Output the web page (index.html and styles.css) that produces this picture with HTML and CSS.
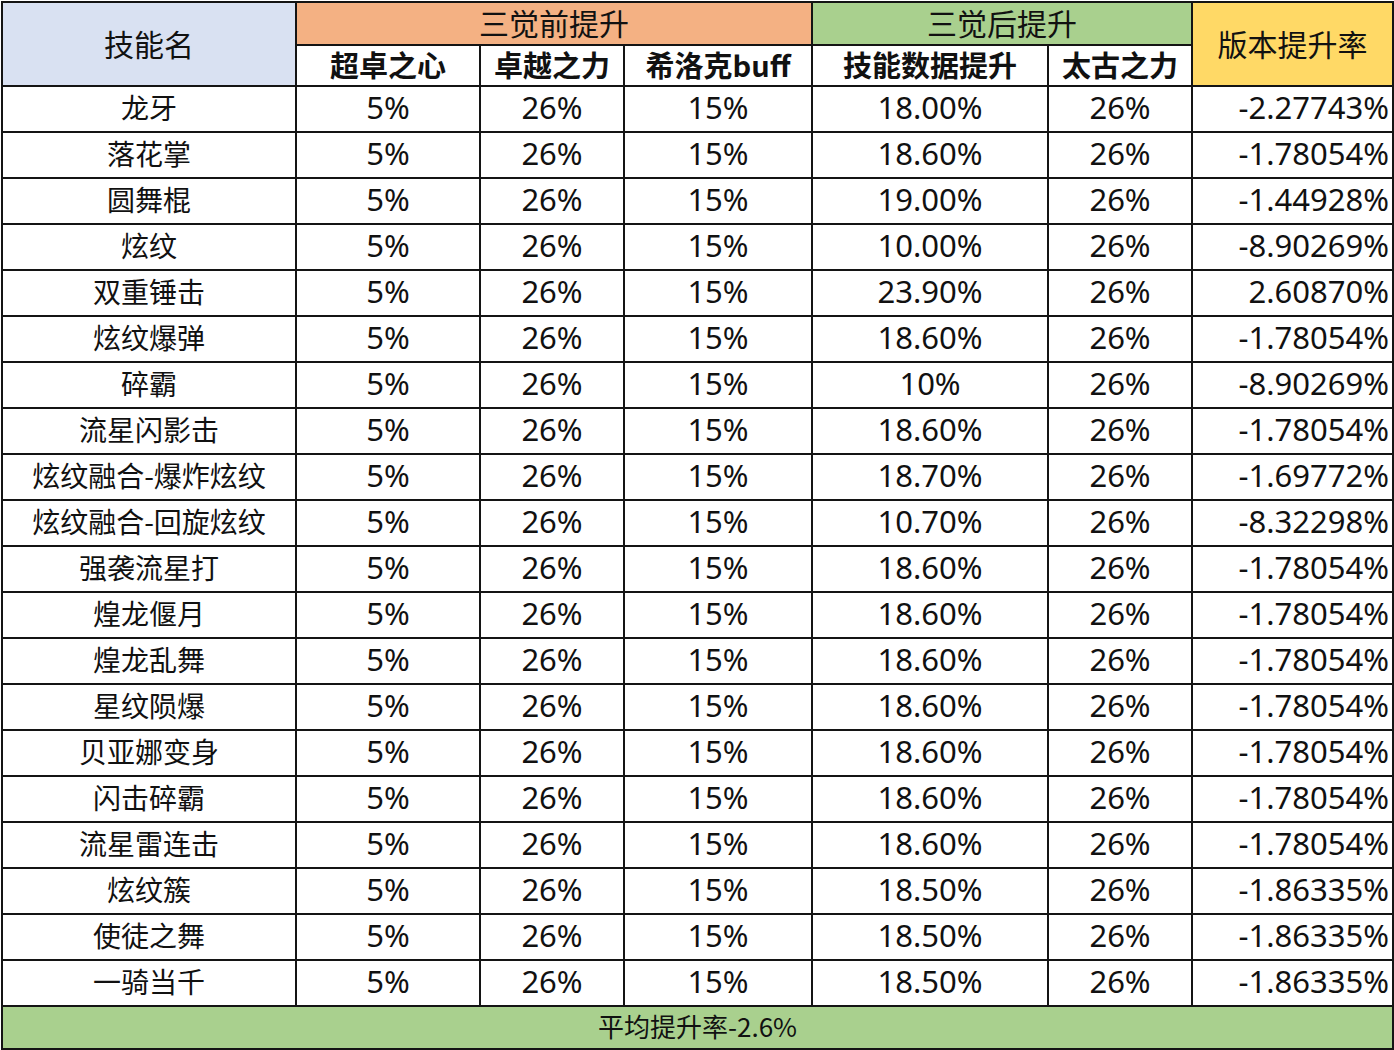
FILE: index.html
```html
<!DOCTYPE html>
<html lang="zh-CN">
<head>
<meta charset="utf-8">
<title>技能提升率</title>
<link rel="stylesheet" href="styles.css">
</head>
<body>
<table class="sheet">
  <colgroup>
    <col class="c1"><col class="c2"><col class="c3"><col class="c4"><col class="c5"><col class="c6"><col class="c7">
  </colgroup>
  <thead>
    <tr class="h1">
      <th rowspan="2" class="name-head">技能名</th>
      <th colspan="3" class="pre">三觉前提升</th>
      <th colspan="2" class="post">三觉后提升</th>
      <th rowspan="2" class="rate-head">版本提升率</th>
    </tr>
    <tr class="h2">
      <th class="sub">超卓之心</th>
      <th class="sub">卓越之力</th>
      <th class="sub">希洛克buff</th>
      <th class="sub">技能数据提升</th>
      <th class="sub">太古之力</th>
    </tr>
  </thead>
  <tbody>
    <tr><td class="name">龙牙</td><td class="num">5%</td><td class="num">26%</td><td class="num">15%</td><td class="num">18.00%</td><td class="num">26%</td><td class="num rate">-2.27743%</td></tr>
    <tr><td class="name">落花掌</td><td class="num">5%</td><td class="num">26%</td><td class="num">15%</td><td class="num">18.60%</td><td class="num">26%</td><td class="num rate">-1.78054%</td></tr>
    <tr><td class="name">圆舞棍</td><td class="num">5%</td><td class="num">26%</td><td class="num">15%</td><td class="num">19.00%</td><td class="num">26%</td><td class="num rate">-1.44928%</td></tr>
    <tr><td class="name">炫纹</td><td class="num">5%</td><td class="num">26%</td><td class="num">15%</td><td class="num">10.00%</td><td class="num">26%</td><td class="num rate">-8.90269%</td></tr>
    <tr><td class="name">双重锤击</td><td class="num">5%</td><td class="num">26%</td><td class="num">15%</td><td class="num">23.90%</td><td class="num">26%</td><td class="num rate">2.60870%</td></tr>
    <tr><td class="name">炫纹爆弹</td><td class="num">5%</td><td class="num">26%</td><td class="num">15%</td><td class="num">18.60%</td><td class="num">26%</td><td class="num rate">-1.78054%</td></tr>
    <tr><td class="name">碎霸</td><td class="num">5%</td><td class="num">26%</td><td class="num">15%</td><td class="num">10%</td><td class="num">26%</td><td class="num rate">-8.90269%</td></tr>
    <tr><td class="name">流星闪影击</td><td class="num">5%</td><td class="num">26%</td><td class="num">15%</td><td class="num">18.60%</td><td class="num">26%</td><td class="num rate">-1.78054%</td></tr>
    <tr><td class="name">炫纹融合-爆炸炫纹</td><td class="num">5%</td><td class="num">26%</td><td class="num">15%</td><td class="num">18.70%</td><td class="num">26%</td><td class="num rate">-1.69772%</td></tr>
    <tr><td class="name">炫纹融合-回旋炫纹</td><td class="num">5%</td><td class="num">26%</td><td class="num">15%</td><td class="num">10.70%</td><td class="num">26%</td><td class="num rate">-8.32298%</td></tr>
    <tr><td class="name">强袭流星打</td><td class="num">5%</td><td class="num">26%</td><td class="num">15%</td><td class="num">18.60%</td><td class="num">26%</td><td class="num rate">-1.78054%</td></tr>
    <tr><td class="name">煌龙偃月</td><td class="num">5%</td><td class="num">26%</td><td class="num">15%</td><td class="num">18.60%</td><td class="num">26%</td><td class="num rate">-1.78054%</td></tr>
    <tr><td class="name">煌龙乱舞</td><td class="num">5%</td><td class="num">26%</td><td class="num">15%</td><td class="num">18.60%</td><td class="num">26%</td><td class="num rate">-1.78054%</td></tr>
    <tr><td class="name">星纹陨爆</td><td class="num">5%</td><td class="num">26%</td><td class="num">15%</td><td class="num">18.60%</td><td class="num">26%</td><td class="num rate">-1.78054%</td></tr>
    <tr><td class="name">贝亚娜变身</td><td class="num">5%</td><td class="num">26%</td><td class="num">15%</td><td class="num">18.60%</td><td class="num">26%</td><td class="num rate">-1.78054%</td></tr>
    <tr><td class="name">闪击碎霸</td><td class="num">5%</td><td class="num">26%</td><td class="num">15%</td><td class="num">18.60%</td><td class="num">26%</td><td class="num rate">-1.78054%</td></tr>
    <tr><td class="name">流星雷连击</td><td class="num">5%</td><td class="num">26%</td><td class="num">15%</td><td class="num">18.60%</td><td class="num">26%</td><td class="num rate">-1.78054%</td></tr>
    <tr><td class="name">炫纹簇</td><td class="num">5%</td><td class="num">26%</td><td class="num">15%</td><td class="num">18.50%</td><td class="num">26%</td><td class="num rate">-1.86335%</td></tr>
    <tr><td class="name">使徒之舞</td><td class="num">5%</td><td class="num">26%</td><td class="num">15%</td><td class="num">18.50%</td><td class="num">26%</td><td class="num rate">-1.86335%</td></tr>
    <tr><td class="name">一骑当千</td><td class="num">5%</td><td class="num">26%</td><td class="num">15%</td><td class="num">18.50%</td><td class="num">26%</td><td class="num rate">-1.86335%</td></tr>
  </tbody>
  <tfoot>
    <tr><td colspan="7" class="avg">平均提升率-2.6%</td></tr>
  </tfoot>
</table>
</body>
</html>
```
FILE: styles.css
```css
html, body {
  margin: 0;
  padding: 0;
  background: #ffffff;
}

body {
  font-family: "Noto Sans CJK SC", "Noto Sans", sans-serif;
  color: #111;
}

.sheet {
  border-collapse: collapse;
  table-layout: fixed;
  width: 1393px;
  margin: 1px 0 0 1px;
}

.c1 { width: 294px; }
.c2 { width: 184px; }
.c3 { width: 144px; }
.c4 { width: 188px; }
.c5 { width: 236px; }
.c6 { width: 144px; }
.c7 { width: 201px; }

.sheet th,
.sheet td {
  border: 2px solid #141414;
  padding: 0;
  text-align: center;
  vertical-align: middle;
  white-space: nowrap;
}

.sheet .h1 th {
  height: 38px;
  padding-bottom: 3px;
  font-weight: 400;
  font-size: 30px;
  line-height: 1.2;
}

.sheet .h2 th {
  height: 36px;
  padding-bottom: 3px;
}

.sheet .name-head {
  background: #d9e1f2;
  font-weight: 400;
  font-size: 29px;
}

.sheet .pre {
  background: #f4b183;
}

.sheet .post {
  background: #a9d08e;
}

.sheet .rate-head {
  background: #ffd966;
  font-weight: 400;
  font-size: 29px;
}

.sheet .sub {
  font-weight: 700;
  font-size: 29px;
  line-height: 1.2;
  background: #ffffff;
}

.sheet tbody td {
  height: 41px;
  padding-bottom: 3px;
  line-height: 1.2;
}

.sheet .name {
  font-size: 28px;
}

.sheet .num {
  font-family: "Noto Sans", "Noto Sans CJK SC", sans-serif;
  font-size: 31px;
}

.sheet .rate {
  text-align: right;
  padding-right: 3px;
}

.sheet .avg {
  height: 38px;
  padding-bottom: 3px;
  background: #a9d08e;
  font-size: 26px;
  line-height: 1.2;
}
```
